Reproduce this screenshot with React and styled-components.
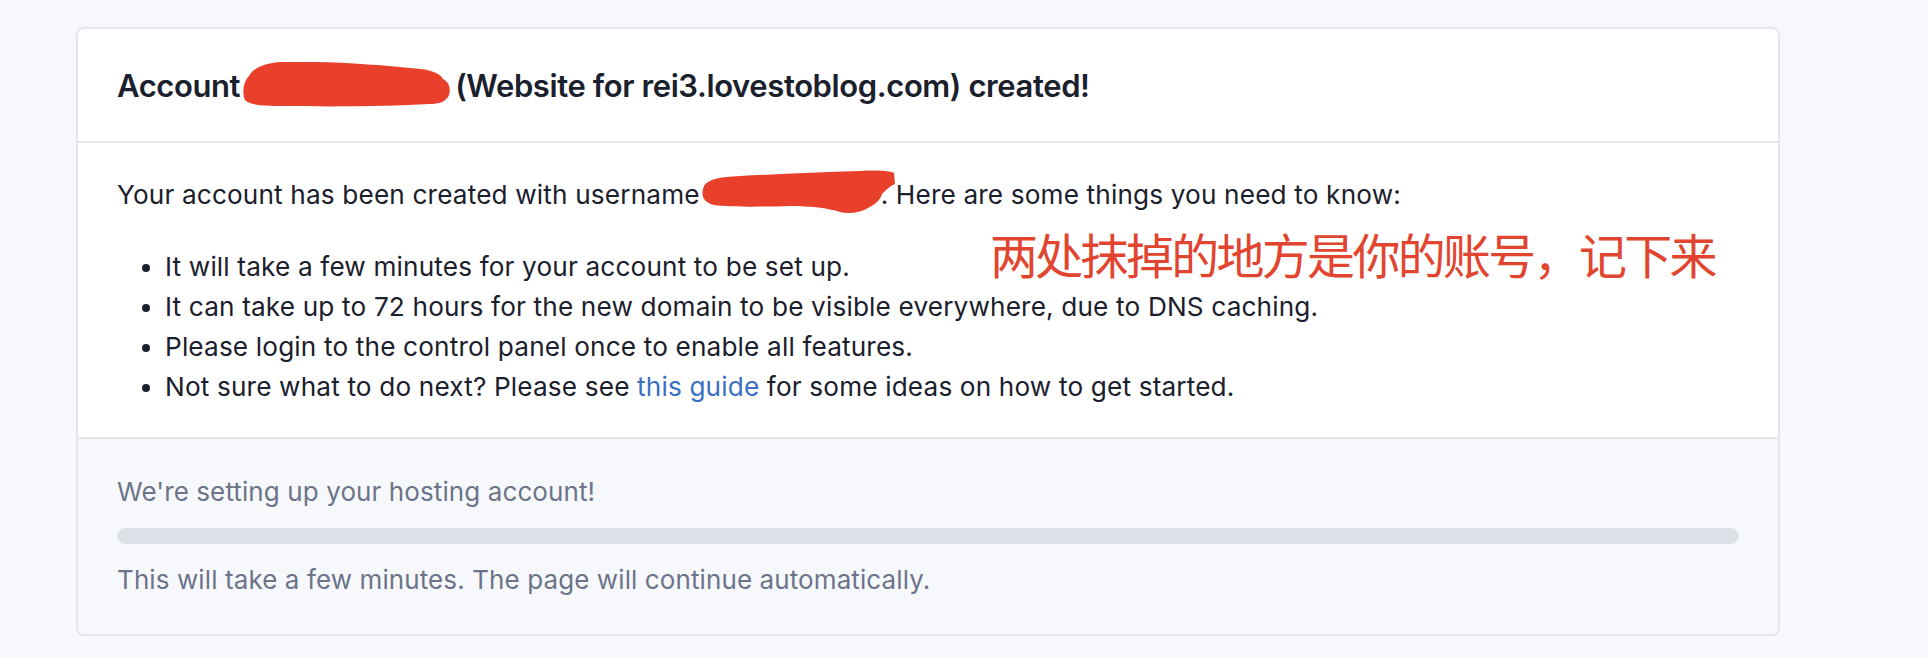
import React from "react";
import styled, { createGlobalStyle } from "styled-components";

const GlobalStyle = createGlobalStyle`
  body {
    margin: 0;
    background: #f7f8fb;
    font-family: Inter, "Noto Sans", sans-serif;
    color: #1a202c;
  }
`;

const Page = styled.div`
  padding: 27px 0 24px 76px;
`;

const Card = styled.div`
  position: relative;
  width: 1704px;
  box-sizing: border-box;
  background: #fff;
  border: 2px solid #e4e6ec;
  border-radius: 8px;
  overflow: hidden;
`;

const Header = styled.div`
  padding: 33px 39px 31px;
  border-bottom: 2px solid #e4e6ec;
`;

const Title = styled.h1`
  margin: 0;
  font-size: 31px;
  line-height: 48px;
  font-weight: 600;
  color: #1a202c;
  letter-spacing: -0.4px;
`;

const Body = styled.div`
  padding: 32px 39px 32px;
  font-size: 26.2px;
  line-height: 40px;
  letter-spacing: 0.15px;
`;

const Intro = styled.p`
  margin: 0 0 32px;
`;

const List = styled.ul`
  margin: 0;
  padding-left: 48px;
`;

const Item = styled.li`
  line-height: 40px;
`;

const Link = styled.a`
  color: #3a6fc2;
  text-decoration: none;
`;

const Footer = styled.div`
  padding: 33px 39px 34px;
  background: #f7f8fb;
  border-top: 2px solid #e4e6ec;
  margin-top: -2px;
  color: #6b7489;
  font-size: 26px;
  line-height: 40px;
  letter-spacing: 0.1px;
`;

const Note = styled.p`
  margin: 0;
`;

const Bar = styled.div`
  height: 16px;
  margin: 16px 0;
  border-radius: 8px;
  background: #dfe1e8;
`;

const Blot = styled.span`
  display: inline-block;
  vertical-align: middle;
  width: ${(p) => p.$w}px;
  height: ${(p) => p.$h}px;
  margin: ${(p) => p.$m};
  svg {
    display: block;
  }
`;

const Annotation = styled.div`
  position: absolute;
  left: 912px;
  top: 196px;
  font-family: "Noto Sans CJK SC", sans-serif;
  font-size: 48px;
  line-height: 56px;
  color: #e2452f;
  letter-spacing: -2.7px;
`;

function TitleBlot() {
  return (
    <Blot $w={208} $h={46} $m="-8px 4px 0 3px">
      <svg width="208" height="46" viewBox="0 0 208 46">
        <path
          d="M6 14 C10 6 22 1 38 0 C80 -1 130 2 178 7 C192 9 198 13 200 17 C206 20 208 26 206 33 C203 40 196 42 186 42 C150 44 100 45 40 44 C20 44 6 43 2 38 C-1 32 0 20 6 14 Z"
          fill="#e8402a"
        />
      </svg>
    </Blot>
  );
}

function NameBlot() {
  return (
    <Blot $w={195} $h={44} $m="-10px -14px 0 0">
      <svg width="195" height="44" viewBox="0 0 195 44">
        <path
          d="M4 16 C8 9 20 7 40 6 C80 4 120 2 160 1 C178 0 190 1 194 3 L195 14 C190 16 186 20 182 24 C180 30 176 34 168 38 C160 43 148 44 140 42 C128 38 110 36 90 36 C60 37 30 37 14 35 C4 33 0 26 4 16 Z"
          fill="#e8402a"
        />
      </svg>
    </Blot>
  );
}

export default function App() {
  return (
    <>
      <GlobalStyle />
      <Page>
        <Card>
          <Header>
            <Title>
              Account
              <TitleBlot />
              (Website for rei3.lovestoblog.com) created!
            </Title>
          </Header>
          <Body>
            <Intro>
              Your account has been created with username
              <NameBlot />. Here are some things you need to know:
            </Intro>
            <List>
              <Item>It will take a few minutes for your account to be set up.</Item>
              <Item>
                It can take up to 72 hours for the new domain to be visible everywhere, due to DNS
                caching.
              </Item>
              <Item>Please login to the control panel once to enable all features.</Item>
              <Item>
                Not sure what to do next? Please see <Link href="#">this guide</Link> for some ideas
                on how to get started.
              </Item>
            </List>
          </Body>
          <Footer>
            <Note>We're setting up your hosting account!</Note>
            <Bar />
            <Note>This will take a few minutes. The page will continue automatically.</Note>
          </Footer>
          <Annotation>两处抹掉的地方是你的账号，记下来</Annotation>
        </Card>
      </Page>
    </>
  );
}
